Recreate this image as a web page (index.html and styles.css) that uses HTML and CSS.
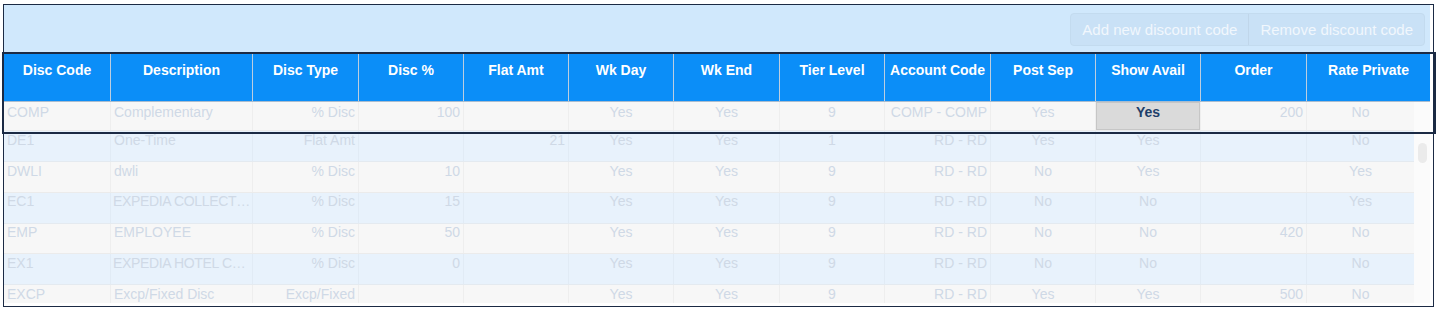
FILE: index.html
```html
<!DOCTYPE html>
<html>
<head>
<meta charset="utf-8">
<title>Discount codes</title>
<link rel="stylesheet" href="styles.css">
</head>
<body>
<div class="frame">
  <div class="panel">
    <div class="toolbar">
      <div class="btn-group">
        <button class="btn">Add new discount code</button>
        <button class="btn">Remove discount code</button>
      </div>
    </div>
    <div class="thead">
      <div class="th">Disc Code</div>
      <div class="th">Description</div>
      <div class="th">Disc Type</div>
      <div class="th">Disc %</div>
      <div class="th">Flat Amt</div>
      <div class="th">Wk Day</div>
      <div class="th">Wk End</div>
      <div class="th">Tier Level</div>
      <div class="th">Account Code</div>
      <div class="th">Post Sep</div>
      <div class="th">Show Avail</div>
      <div class="th">Order</div>
      <div class="th">Rate Private</div>
    </div>
    <div class="tbody">
      <div class="rows">
        <div class="row">
          <div class="td l">COMP</div><div class="td l">Complementary</div><div class="td r">% Disc</div><div class="td r">100</div><div class="td r"></div><div class="td c">Yes</div><div class="td c">Yes</div><div class="td c">9</div><div class="td r">COMP - COMP</div><div class="td c">Yes</div><div class="td c selected">Yes</div><div class="td r">200</div><div class="td c">No</div>
        </div>
        <div class="row">
          <div class="td l">DE1</div><div class="td l">One-Time</div><div class="td r">Flat Amt</div><div class="td r"></div><div class="td r">21</div><div class="td c">Yes</div><div class="td c">Yes</div><div class="td c">1</div><div class="td r">RD - RD</div><div class="td c">Yes</div><div class="td c">Yes</div><div class="td r"></div><div class="td c">No</div>
        </div>
        <div class="row">
          <div class="td l">DWLI</div><div class="td l">dwli</div><div class="td r">% Disc</div><div class="td r">10</div><div class="td r"></div><div class="td c">Yes</div><div class="td c">Yes</div><div class="td c">9</div><div class="td r">RD - RD</div><div class="td c">No</div><div class="td c">Yes</div><div class="td r"></div><div class="td c">Yes</div>
        </div>
        <div class="row">
          <div class="td l">EC1</div><div class="td l trunc">EXPEDIA COLLECT…</div><div class="td r">% Disc</div><div class="td r">15</div><div class="td r"></div><div class="td c">Yes</div><div class="td c">Yes</div><div class="td c">9</div><div class="td r">RD - RD</div><div class="td c">No</div><div class="td c">No</div><div class="td r"></div><div class="td c">Yes</div>
        </div>
        <div class="row">
          <div class="td l">EMP</div><div class="td l">EMPLOYEE</div><div class="td r">% Disc</div><div class="td r">50</div><div class="td r"></div><div class="td c">Yes</div><div class="td c">Yes</div><div class="td c">9</div><div class="td r">RD - RD</div><div class="td c">No</div><div class="td c">No</div><div class="td r">420</div><div class="td c">No</div>
        </div>
        <div class="row">
          <div class="td l">EX1</div><div class="td l trunc">EXPEDIA HOTEL C…</div><div class="td r">% Disc</div><div class="td r">0</div><div class="td r"></div><div class="td c">Yes</div><div class="td c">Yes</div><div class="td c">9</div><div class="td r">RD - RD</div><div class="td c">No</div><div class="td c">No</div><div class="td r"></div><div class="td c">No</div>
        </div>
        <div class="row">
          <div class="td l">EXCP</div><div class="td l">Excp/Fixed Disc</div><div class="td r">Excp/Fixed</div><div class="td r"></div><div class="td r"></div><div class="td c">Yes</div><div class="td c">Yes</div><div class="td c">9</div><div class="td r">RD - RD</div><div class="td c">Yes</div><div class="td c">Yes</div><div class="td r">500</div><div class="td c">No</div>
        </div>
      </div>
      <div class="scrollbar"><div class="thumb"></div></div>
    </div>
  </div>
  <div class="highlight"></div>
</div>
</body>
</html>
```

FILE: styles.css
```css
* { box-sizing: border-box; }

html, body {
  margin: 0;
  padding: 0;
  background: #ffffff;
}

body {
  font-family: "Liberation Sans", Arial, Helvetica, sans-serif;
  font-size: 14px;
}

.frame {
  position: relative;
  margin: 4px 0 0 3px;
  width: 1431px;
  height: 303px;
  border: 1px solid #1b2a44;
  padding: 0 3px 3px 0;
  background: #ffffff;
}

.panel {
  width: 1426px;
  display: flex;
  flex-direction: column;
}

.toolbar {
  height: 48px;
  background: #d0e8fc;
  display: flex;
  justify-content: flex-end;
  align-items: flex-start;
  padding: 8px 5px 0 0;
}

.btn-group {
  display: flex;
  height: 33px;
  border: 1px solid #c3dbef;
  border-radius: 4px;
  background: #c9e1f6;
  overflow: hidden;
}

.btn {
  font-family: "Liberation Sans", Arial, Helvetica, sans-serif;
  font-size: 15px;
  color: #f1f7fd;
  background: transparent;
  border: 0;
  padding: 0 11px;
  height: 100%;
  margin: 0;
}

.btn + .btn {
  border-left: 1px solid #c0d6ea;
  padding: 0 11px 0 11px;
}

.thead {
  display: grid;
  grid-template-columns: 106px 142px 106px 105px 105px 105px 106px 105px 106px 105px 105px 106px 124px;
  height: 49px;
  background: #0b8ef8;
  border-bottom: 1px solid #a9bccf;
}

.th {
  color: #ffffff;
  font-weight: bold;
  text-align: center;
  line-height: 16px;
  padding-top: 9px;
  white-space: nowrap;
}

.th + .th {
  border-left: 1px solid #bccee0;
}

.tbody {
  display: flex;
  height: 201px;
  overflow: hidden;
}

.rows {
  width: 1410px;
  display: flex;
  flex-direction: column;
}

.row {
  display: grid;
  grid-template-columns: 106px 142px 106px 105px 105px 105px 106px 105px 106px 105px 105px 106px 108px;
  height: 30.75px;
  flex: none;
  background: #f7f7f7;
  border-bottom: 1px solid #ebebeb;
}

.row:first-child {
  height: 29.25px;
}

.row:nth-child(even) {
  background: #e8f2fc;
  border-bottom-color: #e4eaf0;
}

.td {
  color: #cfd9e6;
  line-height: 17px;
  padding: 0.5px 3px 0 3px;
  white-space: nowrap;
  overflow: hidden;
}

.td.trunc {
  padding-left: 2px;
  padding-right: 0;
  letter-spacing: -0.35px;
}

.row:first-child .td {
  padding-top: 1.5px;
}

.td + .td {
  border-left: 1px solid #eeeeee;
}

.row:nth-child(even) .td + .td {
  border-left-color: #e1ebf5;
}

.l { text-align: left; }
.r { text-align: right; }
.c { text-align: center; }

.td.selected {
  background: #dadada;
  color: #1f3f6a;
  font-weight: bold;
  box-shadow: inset 0 0 0 1px #c6c6c6;
}

.scrollbar {
  width: 16px;
  background: #fbfbfb;
  padding: 41px 3px 0 4px;
}

.thumb {
  width: 9px;
  height: 20px;
  border-radius: 5px;
  background: #ebebeb;
}

.highlight {
  position: absolute;
  left: -2px;
  top: 47px;
  width: 1434px;
  height: 82px;
  border: 2px solid #1b2a44;
  pointer-events: none;
}
```
